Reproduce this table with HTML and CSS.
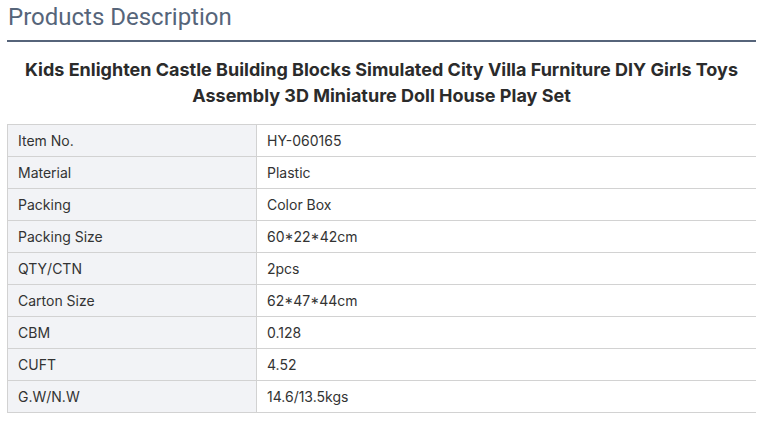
FILE: index.html
```html
<!DOCTYPE html>
<html>
<head>
<meta charset="utf-8">
<link rel="stylesheet" href="styles.css">
</head>
<body>
<div class="wrap">
  <h2 class="section-title">Products Description</h2>
  <h1 class="product-title">Kids Enlighten Castle Building Blocks Simulated City Villa Furniture DIY Girls Toys Assembly 3D Miniature Doll House Play Set</h1>
  <table class="spec">
    <tr><td class="k">Item No.</td><td class="v">HY-060165</td></tr>
    <tr><td class="k">Material</td><td class="v">Plastic</td></tr>
    <tr><td class="k">Packing</td><td class="v">Color Box</td></tr>
    <tr><td class="k">Packing Size</td><td class="v">60*22*42cm</td></tr>
    <tr><td class="k">QTY/CTN</td><td class="v">2pcs</td></tr>
    <tr><td class="k">Carton Size</td><td class="v">62*47*44cm</td></tr>
    <tr><td class="k">CBM</td><td class="v">0.128</td></tr>
    <tr><td class="k">CUFT</td><td class="v">4.52</td></tr>
    <tr><td class="k">G.W/N.W</td><td class="v">14.6/13.5kgs</td></tr>
  </table>
</div>
</body>
</html>
```

FILE: styles.css
```css
html, body { margin: 0; padding: 0; background: #fff; }
.wrap {
  margin-left: 7px;
  width: 749px;
  font-family: Inter, "Liberation Sans", sans-serif;
  color: #333;
}
.section-title {
  margin: 0;
  padding: 2px 0 0 1px;
  height: 42px;
  box-sizing: border-box;
  font-family: Roboto, "Liberation Sans", sans-serif;
  font-weight: 400;
  font-size: 24px;
  line-height: 30px;
  color: #56657a;
  border-bottom: 2px solid #56647a;
}
.product-title {
  margin: 15px 0 15px;
  font-size: 18px;
  font-weight: 700;
  line-height: 26px;
  text-align: center;
  color: #2b2b2b;
}
.spec {
  width: 100%;
  border-collapse: collapse;
  font-size: 14px;
}
.spec td {
  height: 32px;
  padding: 0 10px;
  border: 1px solid #d2d2d2;
  border-right: none;
  line-height: 20px;
  color: #333;
  box-sizing: border-box;
}
.spec td.k {
  width: 249px;
  background: #f2f3f6;
  border-right: 1px solid #d2d2d2;
}
```
